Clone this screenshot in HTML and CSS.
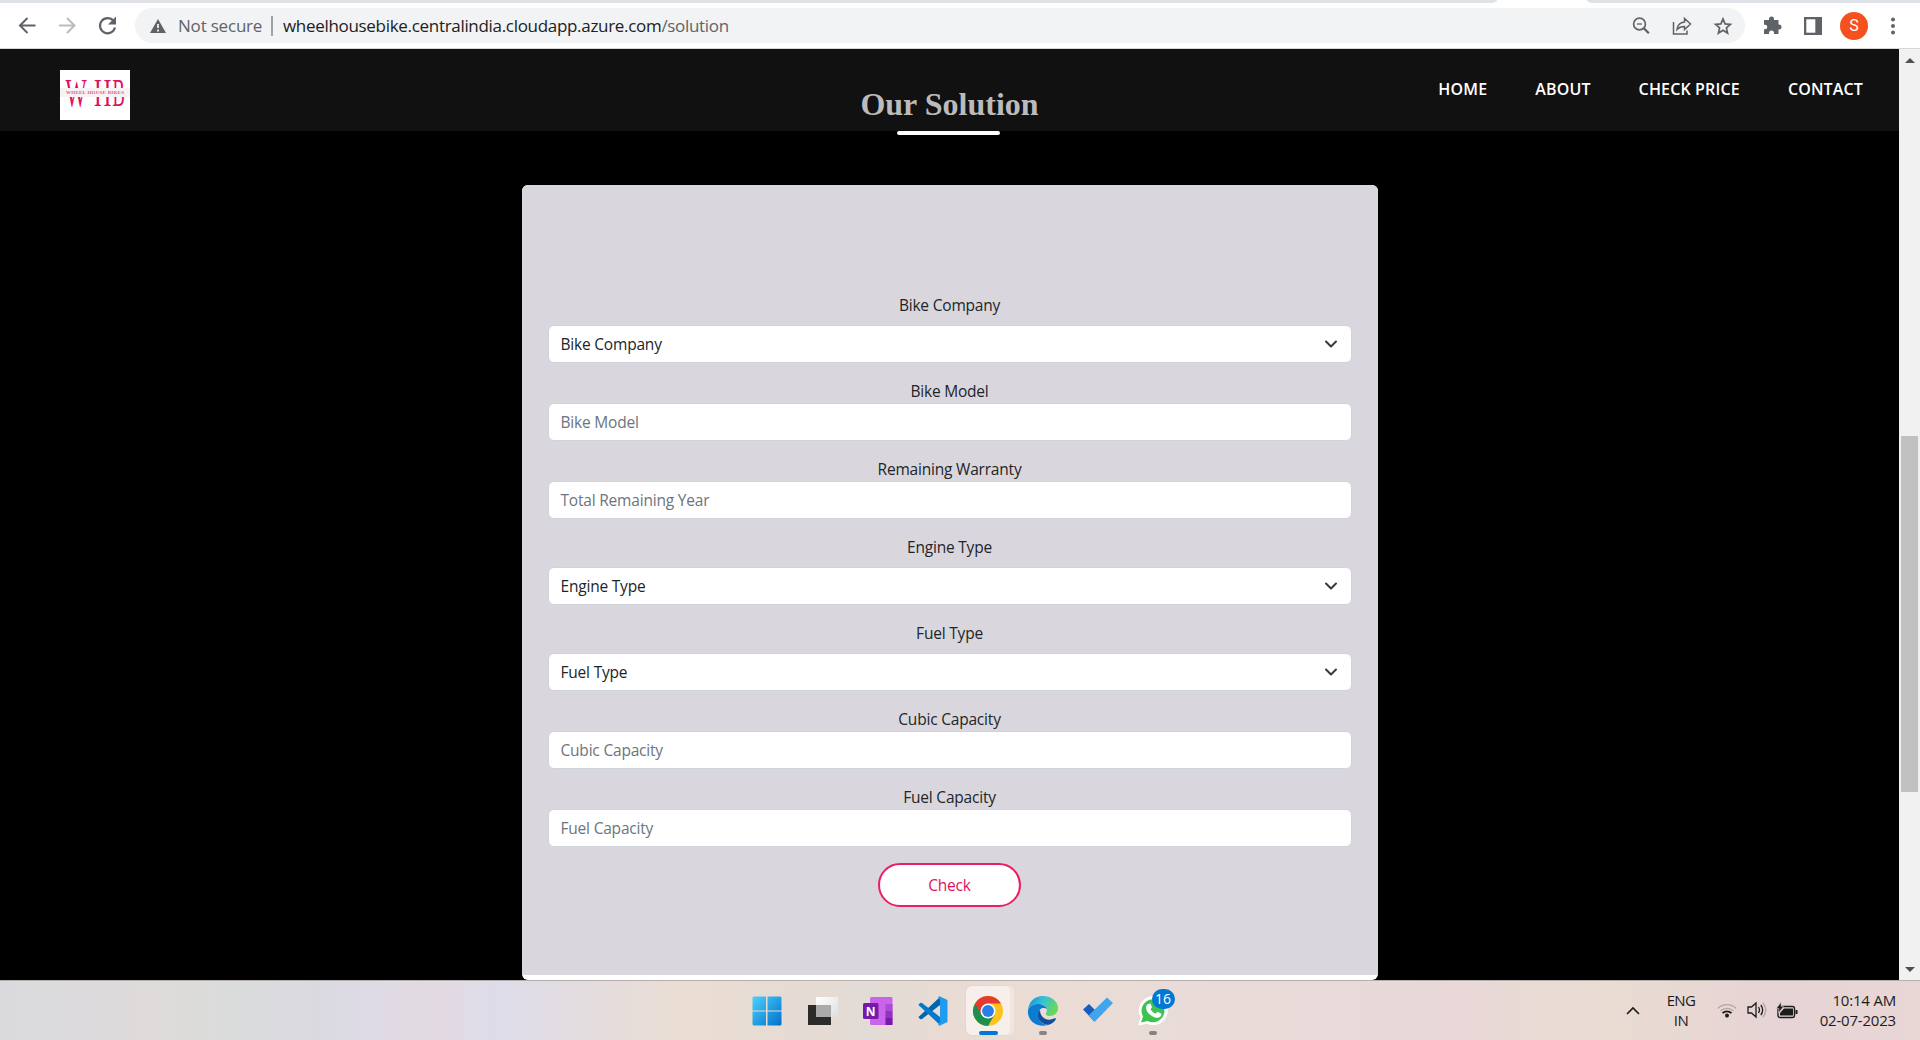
FILE: index.html
```html
<!DOCTYPE html>
<html lang="en">
<head>
<meta charset="utf-8">
<title>Our Solution</title>
<link rel="stylesheet" href="styles.css">
</head>
<body>
<header class="browser">
  <div class="tabstrip"><span class="tab-left"></span><span class="tab-right"></span></div>
  <div class="toolbar">
    <div class="history">
      <svg width="20" height="20" viewBox="0 0 20 20"><path d="M18.500 9.500H3.500M10.500 2L3 9.500l7.500 7.500" fill="none" stroke="#5f6368" stroke-width="2"/></svg>
      <svg width="20" height="20" viewBox="0 0 20 20"><path d="M2 9.500h15M10 2L17.500 9.500 10 17" fill="none" stroke="#babcbe" stroke-width="2"/></svg>
      <svg width="20" height="20" viewBox="0 0 20 20"><path d="M16.500 4.800A7.600 7.600 0 1 0 18 11.500" fill="none" stroke="#5f6368" stroke-width="2.200"/><path d="M19 .500v8h-8z" fill="#5f6368"/></svg>
    </div>
    <div class="omnibox">
      <svg class="warn" width="16" height="14" viewBox="0 0 16 14"><path d="M8 0l8 14H0z" fill="#5f6368"/><path d="M8 5v4M8 10.500v2" stroke="#f1f3f4" stroke-width="1.800"/></svg>
      <span class="notsecure">Not secure</span>
      <i class="sep"></i>
      <span class="url">wheelhousebike.centralindia.cloudapp.azure.com<span class="path">/solution</span></span>
      <span class="actions">
        <svg width="18" height="18" viewBox="0 0 18 18" fill="none" stroke="#5f6368" stroke-width="1.700"><circle cx="7.500" cy="7" r="5.900"/><path d="M11.800 11.300l5 5" stroke-width="2.300"/><path d="M5 7h5" stroke-width="1.300"/></svg>
        <svg width="20" height="18" viewBox="0 0 20 18" fill="none" stroke="#5f6368" stroke-width="1.500"><path d="M1.500 5v12h13.500v-3.500M5 12.500c.5-4.500 3-7 7.500-7.500V1.500L18.500 7l-6 5.500V9.500C9 9.500 7 10.300 5 12.500z"/></svg>
        <svg width="18" height="18" viewBox="0 0 18 18" fill="none" stroke="#5f6368" stroke-width="1.700"><path d="M9 2l2.100 4.900 5.300.5-4 3.500 1.200 5.200L9 13.300l-4.600 2.800 1.200-5.200-4-3.500 5.300-.5z"/></svg>
      </span>
    </div>
    <div class="tools">
      <svg width="19" height="19" viewBox="0 0 19 19"><path d="M1 4h5V3a2.500 2.500 0 0 1 5 0v1h4.500v4.500h.5a2.500 2.500 0 0 1 0 5h-.5V18H11v-1a2.500 2.500 0 0 0-5 0v1H1v-4.700h1a2.300 2.300 0 0 0 0-4.600H1z" fill="#5f6368"/></svg>
      <svg width="18" height="18" viewBox="0 0 18 18"><path d="M0 0h18v18H0z" fill="#5f6368"/><path d="M2.300 2.300h9v13.400h-9z" fill="#fff"/></svg>
      <span class="avatar">S</span>
      <svg class="dots" width="6" height="18" viewBox="0 0 6 18" fill="#5f6368"><circle cx="3" cy="2.500" r="2"/><circle cx="3" cy="9" r="2"/><circle cx="3" cy="15.500" r="2"/></svg>
    </div>
  </div>
</header>

<div class="viewport">
  <div class="page">
    <nav class="navbar">
      <svg class="logo" width="70" height="50" viewBox="0 0 70 50">
        <path d="M0 0h70v50H0z" fill="#fff"/>
        <g class="initials"><text transform="translate(5.500 35.500) scale(.56 1)">W</text><text transform="translate(34 35.500) scale(.6 1)">H</text><text transform="translate(52.500 35.500) scale(.46 1)">B</text></g>
        <path d="M0 18h70v9H0z" fill="#f8f3f2"/>
        <text x="6" y="24.200" textLength="58" class="brand">WHEEL HOUSE BIKES</text>
      </svg>
      <h1>Our Solution</h1>
      <ul class="menu"><li>HOME</li><li>ABOUT</li><li>CHECK PRICE</li><li>CONTACT</li></ul>
    </nav>
    <main>
      <form class="card">
        <div class="panel">
          <div class="field wide"><label>Bike Company</label><div class="control">Bike Company<svg class="chevron" width="12" height="8" viewBox="0 0 12 8"><path d="M1 1.500l5 5 5-5"/></svg></div></div>
          <div class="field"><label>Bike Model</label><div class="control hint">Bike Model</div></div>
          <div class="field"><label>Remaining Warranty</label><div class="control hint">Total Remaining Year</div></div>
          <div class="field wide"><label>Engine Type</label><div class="control">Engine Type<svg class="chevron" width="12" height="8" viewBox="0 0 12 8"><path d="M1 1.500l5 5 5-5"/></svg></div></div>
          <div class="field wide"><label>Fuel Type</label><div class="control">Fuel Type<svg class="chevron" width="12" height="8" viewBox="0 0 12 8"><path d="M1 1.500l5 5 5-5"/></svg></div></div>
          <div class="field"><label>Cubic Capacity</label><div class="control hint">Cubic Capacity</div></div>
          <div class="field"><label>Fuel Capacity</label><div class="control hint">Fuel Capacity</div></div>
          <button type="button" class="check">Check</button>
        </div>
      </form>
    </main>
  </div>
  <div class="scrollbar"><i class="up"></i><i class="thumb"></i><i class="down"></i></div>
</div>

<footer class="taskbar">
  <div class="apps">
    <span class="app start"><svg width="30" height="30" viewBox="0 0 30 30"><defs><linearGradient id="win" x1="0" y1="0" x2="1" y2="1" ><stop offset="0" stop-color="#4cd0fb"/><stop offset="1" stop-color="#0070cc"/></linearGradient></defs><path d="M2 .5h12v14H.5V2Q.5.500 2 .5zM15.500.500H28Q29.500.500 29.500 2v12.500h-14zM.5 15.500h13.500v14H2Q.5 29.500.500 28zM15.500 15.500h14V28q0 1.500-1.500 1.500H15.500z" fill="url(#win)"/></svg></span>
    <span class="app"><svg width="30" height="30" viewBox="0 0 30 30"><defs><linearGradient id="pane" x1="0" y1="0" x2="1" y2="1"><stop offset="0" stop-color="#fff"/><stop offset="1" stop-color="#dedede"/></linearGradient></defs><path d="M0 9h23v20H0z" fill="#2b2b29"/><path d="M8 1h22v20H8z" fill="url(#pane)"/><path d="M8 9h15v12H8z" fill="#aaa"/></svg></span>
    <span class="app"><svg width="30" height="30" viewBox="0 0 30 30"><rect x="7" y="1" width="22.500" height="28" rx="1.500" fill="#ca64ea"/><path d="M22.500 8h7v7h-7z" fill="#ae4bd5"/><path d="M22.500 15h7v7h-7z" fill="#9332bf"/><path d="M22.500 22h7v7h-7z" fill="#7719aa"/><rect y="7" width="15.500" height="16" rx="1.500" fill="#7719aa"/><text x="7.700" y="19.500" text-anchor="middle" class="note">N</text></svg></span>
    <span class="app"><svg width="30" height="30" viewBox="0 0 30 30"><path d="M1 20.500L22 1v8L4 23q-1 .7-1.800 0L.5 21.500z" fill="#0065a9"/><path d="M1 9.500L22 29v-8L4 7q-1-.7-1.800 0L.5 8.500z" fill="#007acc"/><path d="M21.500.300L29.500 4v22l-8 3.700L20 29l2-3V4L20 1z" fill="#1f9cf0"/></svg></span>
    <span class="app active"><svg width="30" height="30" viewBox="0 0 48 48"><circle cx="24" cy="24" r="24" fill="#fcc31e"/><path d="M24 24L3.200 12A24 24 0 0 0 24 48l10.400-18z" fill="#1e8e4e"/><path d="M24 12h20.800A24 24 0 0 0 3.200 12l10.400 18L24 24z" fill="#e33b2e"/><circle cx="24" cy="24" r="12" fill="#fff"/><circle cx="24" cy="24" r="9.500" fill="#2b7de9"/></svg></span>
    <span class="app running"><svg width="30" height="30" viewBox="0 0 30 30"><defs><linearGradient id="edge" x1="0" y1="0" x2="1" y2=".4"><stop offset="0" stop-color="#168bcf"/><stop offset=".5" stop-color="#32c2da"/><stop offset="1" stop-color="#68d85b"/></linearGradient></defs><path d="M0 14C1 5 7 0 15 0c9 0 15 6 15 12 0 5-4 8-8 8-3 0-5-1-4-3 3-4-1-9-7-9C6 8 2 10 0 14z" fill="url(#edge)"/><path d="M0 14c2-4 6-6 10-6 4 0 8 2 9 5-6-3-10 2-8 8 1 5 5 8 9 8C9 32-1 25 0 14z" fill="#0c7bd2"/><path d="M12 14c-5 5 0 14 8 15 4-1 7-4 8-6 0-1-1-1-2-.5-6 3-14 0-14-8.500z" fill="#104f99"/></svg></span>
    <span class="app"><svg width="30" height="30" viewBox="0 0 30 30"><path d="M0 13.500L6 8l10 10-5 7z" fill="#195abd"/><path d="M5.500 19.500L24 1.500 30 7 11.500 26z" fill="#41a5ee"/></svg></span>
    <span class="app running"><svg width="30" height="30" viewBox="0 0 30 30"><path d="M0 29.500l2.500-8A14.500 14.500 0 1 1 9 27.700z" fill="#fff"/><path d="M3 26.500l2-6a11.500 11.500 0 1 1 4.500 4.400z" fill="#3ec351"/><path d="M10 8l2.500-.5 1.500 4-1.500 1.700q2 3.500 5 4.500l2-2 4 2c0 4-4 4.800-7 3.600C12 19.500 8 15.500 8 11.500 8 10 9 8.500 10 8z" fill="#fff"/></svg><b class="badge">16</b></span>
  </div>
  <div class="tray">
    <svg class="caret" width="14" height="9" viewBox="0 0 14 9"><path d="M1 8l6-6 6 6" fill="none" stroke="#1d1c1c" stroke-width="1.600"/></svg>
    <div class="lang">ENG<br>IN</div>
    <svg class="wifi" width="20" height="16" viewBox="0 0 20 16" fill="none" stroke-width="1.300"><path d="M.7 6.500a13 13 0 0 1 18.600 0M3.500 9a9.200 9.200 0 0 1 13 0" stroke="#b2a7a3"/><path d="M5.500 11.200a6.300 6.300 0 0 1 9 0" stroke="#1d1c1c" stroke-width="1.700"/><circle cx="10" cy="13.500" r="2" fill="#1d1c1c"/></svg>
    <svg class="volume" width="20" height="18" viewBox="0 0 20 18" fill="none" stroke="#1d1c1c" stroke-width="1.300"><path d="M1 6h3.500L9 2v14l-4.500-4H1zM11.500 6q2 3 0 6M13.800 4q3.700 5 0 10"/><path d="M16 2q5.500 7 0 14" stroke="#b2a7a3"/></svg>
    <svg class="battery" width="21" height="17" viewBox="0 0 21 17"><rect x="1" y="4.500" width="16.500" height="11" rx="2" fill="none" stroke="#1d1c1c" stroke-width="1.400"/><path d="M7 6.500h9v7H3V11zM18.500 8h2v4h-2z" fill="#1d1c1c"/><path d="M4 0L-.5 6.500H2L1.500 11 6.500 4.500H4z" fill="#1d1c1c" stroke="#e8d9d4" stroke-width=".5"/></svg>
    <div class="clock">10:14 AM<br>02-07-2023</div>
  </div>
</footer>
</body>
</html>
```
FILE: styles.css
```css
* { box-sizing: border-box; }
body { margin: 0; width: 1920px; height: 1040px; overflow: hidden; display: flex; flex-direction: column; font-family: "Open Sans", "Noto Sans", sans-serif; }
svg { display: block; flex: none; overflow: visible; }

/* Browser chrome */
.browser { height: 49px; flex: none; background: #fff; border-bottom: 1px solid #d5d7d9; }
.tabstrip { height: 3px; display: flex; justify-content: space-between; }
.tab-left, .tab-right { background: #dee1e6; height: 3px; }
.tab-left { width: 1497px; border-bottom-right-radius: 6px 3px; }
.tab-right { width: 333px; border-bottom-left-radius: 6px 3px; }
.toolbar { height: 45px; display: flex; align-items: center; padding: 0 24px 0 17px; }
.history { display: flex; gap: 20px; width: 118px; }
.omnibox { width: 1610px; height: 35px; border-radius: 18px; background: #f1f3f4; display: flex; align-items: center; padding: 0 13px 0 15px; font-size: 17px; color: #202124; }
.notsecure { color: #5f6368; margin-left: 12px; width: 84px; white-space: nowrap; letter-spacing: -.2px; }
.sep { width: 2px; height: 20px; background: #9fa2a5; margin: 0 10px 0 9px; }
.url { white-space: nowrap; letter-spacing: -.31px; }
.path { color: #5f6368; }
.actions { margin-left: auto; display: flex; align-items: center; gap: 22px; }
.tools { margin-left: 18px; display: flex; align-items: center; flex: 1; gap: 22px; }
.tools .avatar { width: 28px; height: 28px; margin-left: -4px; border-radius: 50%; background: #f4511e; color: #fff; font: 16px/28px Roboto, sans-serif; text-align: center; }
.dots { margin-left: auto; }

/* Site */
.viewport { height: 931px; flex: none; display: flex; background: #000; }
.page { flex: 1; display: flex; flex-direction: column; }
.navbar { height: 82px; flex: none; background: #111; display: grid; grid-template-columns: 1fr auto 1fr; padding: 0 60px; }
.logo { margin-top: 21px; }
.initials { font: 40px "Liberation Serif", serif; fill: #e0115f; }
.brand { font: bold 5px "Liberation Serif", serif; fill: #dc5c86; }
h1 { margin: 34px 0 0; height: 52px; font: bold 32px/42px "Liberation Serif", serif; color: #bbb; position: relative; }
h1::after { content: ""; position: absolute; left: 37px; bottom: 0; width: 103px; height: 4px; border-radius: 2px; background: #fff; }
.menu { margin: 0 -24px 0 0; padding: 27px 0 0; list-style: none; display: flex; justify-content: flex-end; gap: 48px; color: #fff; font: 600 16px/26px "Open Sans", sans-serif; letter-spacing: .15px; }
.menu li { white-space: nowrap; }
main { display: flex; justify-content: center; padding-top: 54px; }
.card { width: 856px; height: 795px; border-radius: 6px; background: #fff; overflow: hidden; }
.panel { height: 790px; background: #d9d7dd; padding: 108px 26px 0; display: flex; flex-direction: column; align-items: center; color: #212529; font-size: 15.5px; letter-spacing: -.2px; }
.field { width: 100%; margin-bottom: 16px; }
.field label { display: block; height: 24px; line-height: 24px; text-align: center; }
.wide label { margin-bottom: 8px; }
.control { height: 38px; border: 1px solid #ced4da; border-radius: 6px; background: #fff; padding: 0 14px 1px 12px; display: flex; align-items: center; justify-content: space-between; line-height: 24px; }
.hint { color: #6c757d; }
.chevron path { fill: none; stroke: #343a40; stroke-width: 2; stroke-linecap: round; stroke-linejoin: round; }
.check { width: 143px; height: 44px; flex: none; border: 2px solid #e91e63; border-radius: 22px; background: #fff; color: #e0115f; font: 15.5px "Open Sans", sans-serif; letter-spacing: -.2px; padding: 0; }
.scrollbar { width: 21px; background: #f1f1f1; display: flex; flex-direction: column; align-items: center; }
.up, .down { border: 5px solid transparent; width: 0; height: 0; }
.up { border-bottom-color: #505050; border-top: 0; margin-top: 9px; }
.thumb { width: 17px; height: 356px; background: #c1c1c1; margin-top: 373px; }
.down { border-top-color: #505050; border-bottom: 0; margin-top: auto; margin-bottom: 8px; }

/* Taskbar */
.taskbar { height: 60px; border-top: 1px solid #b4aeac; background: linear-gradient(90deg, #dadade 0, #dddadd 5%, #dfdbd9 8%, #dadcdc 12%, #dbd9e1 17%, #dedbe6 19%, #e3dae1 22.500%, #dedcea 26%, #e4dcde 31%, #eaddd2 36%, #e3dbd6 45%, #ebdcd3 52%, #e9dbd8 62%, #e9d8d8 75%, #e9dcd2 84%, #e7d4d5 92%, #e8d7d5 100%); display: grid; grid-template-columns: 1fr auto 1fr; color: #1d1c1c; }
.apps { grid-column: 2; display: flex; align-items: center; gap: 7px; }
.app { position: relative; width: 48px; height: 49px; display: grid; place-items: center; border-radius: 5px; }
.start { padding-right: 2px; }
.active { background: #f7efeb; width: 44px; margin: 0 2px; box-shadow: 4px 0 0 #f0e5e0, 0 0 1px #b9aaa5; }
.active::after, .running::after { content: ""; position: absolute; bottom: 0; left: 13px; width: 19px; height: 4px; border-radius: 2px; background: #0078d4; }
.running::after { left: 20px; width: 8px; background: #8b817e; }
.note { font: bold 12px "Open Sans", sans-serif; fill: #fff; }
.badge { position: absolute; left: 23px; top: 3px; width: 23px; height: 20px; border-radius: 10px; background: #0078d4; color: #fff; font: 14px/20px "Open Sans", sans-serif; text-align: center; }
.tray { display: flex; align-items: center; justify-content: flex-end; padding: 0 24px 1px 0; font-size: 15px; line-height: 20px; white-space: nowrap; }
.lang { width: 34px; text-align: center; margin: 0 19px 0 24px; letter-spacing: -.6px; }
.wifi { margin-right: 10px; }
.volume { margin-right: 10px; }
.clock { width: 79px; margin-left: 19px; text-align: right; letter-spacing: -.2px; }
```
